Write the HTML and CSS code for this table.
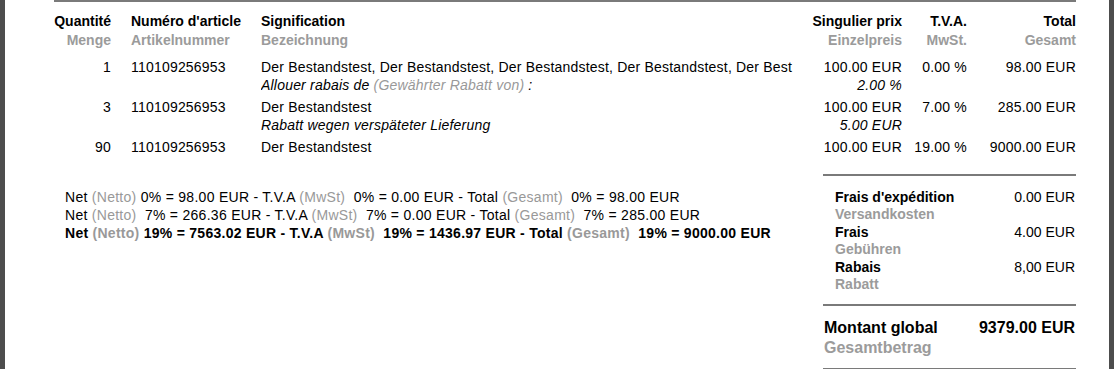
FILE: index.html
```html
<!DOCTYPE html>
<html lang="fr">
<head>
<meta charset="utf-8">
<title>Facture</title>
<link rel="stylesheet" href="styles.css">
</head>
<body>
<div class="frame">
  <div class="page">
    <div class="items">
      <div class="cell head r"><b>Quantité</b><span class="de">Menge</span></div>
      <div class="cell head"><b>Numéro d'article</b><span class="de">Artikelnummer</span></div>
      <div class="cell head"><b>Signification</b><span class="de">Bezeichnung</span></div>
      <div class="cell head r"><b>Singulier prix</b><span class="de">Einzelpreis</span></div>
      <div class="cell head r"><b>T.V.A.</b><span class="de">MwSt.</span></div>
      <div class="cell head r"><b>Total</b><span class="de">Gesamt</span></div>

      <div class="cell row r">1</div>
      <div class="cell row">110109256953</div>
      <div class="cell row desc">Der Bestandstest, Der Bestandstest, Der Bestandstest, Der Bestandstest, Der Best<i>Allouer rabais de <span class="muted">(Gewährter Rabatt von)</span> :</i></div>
      <div class="cell row r">100.00 EUR<i>2.00 %</i></div>
      <div class="cell row r">0.00 %</div>
      <div class="cell row r">98.00 EUR</div>

      <div class="cell row r">3</div>
      <div class="cell row">110109256953</div>
      <div class="cell row desc">Der Bestandstest<i>Rabatt wegen verspäteter Lieferung</i></div>
      <div class="cell row r">100.00 EUR<i>5.00 EUR</i></div>
      <div class="cell row r">7.00 %</div>
      <div class="cell row r">285.00 EUR</div>

      <div class="cell row r">90</div>
      <div class="cell row">110109256953</div>
      <div class="cell row desc">Der Bestandstest</div>
      <div class="cell row r">100.00 EUR</div>
      <div class="cell row r">19.00 %</div>
      <div class="cell row r">9000.00 EUR</div>
    </div>

    <div class="summary">
      <div class="vat-lines">
        <div>Net <span class="muted">(Netto)</span> 0% = 98.00 EUR - T.V.A <span class="muted">(MwSt)</span>&nbsp; 0% = 0.00 EUR - Total <span class="muted">(Gesamt)</span>&nbsp; 0% = 98.00 EUR</div>
        <div>Net <span class="muted">(Netto)</span>&nbsp; 7% = 266.36 EUR - T.V.A <span class="muted">(MwSt)</span>&nbsp; 7% = 0.00 EUR - Total <span class="muted">(Gesamt)</span>&nbsp; 7% = 285.00 EUR</div>
        <div class="strong">Net <span class="muted">(Netto)</span> 19% = 7563.02 EUR - T.V.A <span class="muted">(MwSt)</span>&nbsp; 19% = 1436.97 EUR - Total <span class="muted">(Gesamt)</span>&nbsp; 19% = 9000.00 EUR</div>
      </div>
      <div class="totals">
        <div class="charges">
          <div class="charge">
            <div class="label"><b>Frais d'expédition</b><span class="de">Versandkosten</span></div>
            <div class="amount">0.00 EUR</div>
          </div>
          <div class="charge">
            <div class="label"><b>Frais</b><span class="de">Gebühren</span></div>
            <div class="amount">4.00 EUR</div>
          </div>
          <div class="charge">
            <div class="label"><b>Rabais</b><span class="de">Rabatt</span></div>
            <div class="amount">8,00 EUR</div>
          </div>
        </div>
        <div class="grand">
          <div class="label"><b>Montant global</b><span class="de">Gesamtbetrag</span></div>
          <div class="amount">9379.00 EUR</div>
        </div>
      </div>
    </div>
  </div>
</div>
</body>
</html>
```

FILE: styles.css
```css
* { box-sizing: border-box; }
html, body { margin: 0; padding: 0; background: #fff; }
body {
  font-family: "Liberation Sans", Arial, sans-serif;
  font-size: 14px;
  color: #000;
}
.frame {
  height: 369px;
  border-left: 5px solid #4d4d4d;
  border-right: 5px solid #4d4d4d;
  overflow: hidden;
}
.page {
  margin-left: 49px;
  width: 1022px;
  border-top: 2px solid #7a7a7a;
}
.items {
  display: grid;
  grid-template-columns: 77px 130px 1fr 100px 65px 109px;
}
.cell {
  white-space: nowrap;
  line-height: 18px;
}
.cell b, .cell i, .cell .de { display: block; }
.r { text-align: right; }
.items > .cell:nth-child(6n+1) { padding-right: 20px; }
.head {
  padding-top: 10px;
  padding-bottom: 5.5px;
  line-height: 19px;
}
.head b { font-weight: bold; }
.de {
  color: #9b9b9b;
  font-weight: bold;
}
.row {
  padding: 2px 0;
  letter-spacing: 0.2px;
}
.row i { font-style: italic; }
.desc { overflow: hidden; }
.muted { color: #999; }
.summary {
  display: flex;
  justify-content: space-between;
  margin-top: 16px;
}
.vat-lines {
  padding-left: 11px;
  padding-top: 14px;
  line-height: 18px;
  white-space: nowrap;
  letter-spacing: 0.28px;
}
.strong { font-weight: bold; letter-spacing: 0.27px; }
.totals {
  width: 253px;
  border-top: 2px solid #7a7a7a;
}
.charges {
  padding: 13px 1px 9.5px 12px;
  border-bottom: 2px solid #7a7a7a;
  line-height: 17.6px;
}
.charge {
  display: flex;
  justify-content: space-between;
}
.label b, .label .de { display: block; }
.grand {
  display: flex;
  justify-content: space-between;
  font-size: 16px;
  font-weight: bold;
  line-height: 20px;
  padding: 12.5px 1px 10px 1px;
  border-bottom: 2px solid #7a7a7a;
}
```
